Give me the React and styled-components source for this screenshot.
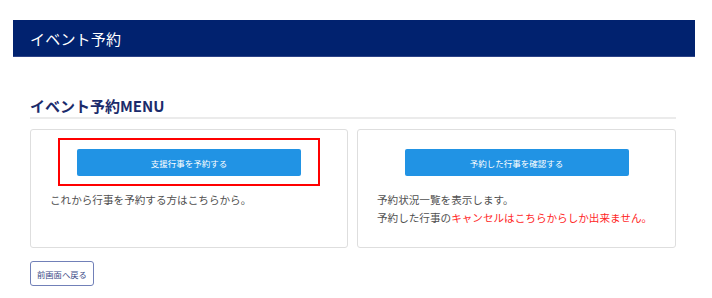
import React from 'react';
import styled, { createGlobalStyle } from 'styled-components';

const GlobalStyle = createGlobalStyle`
  body {
    margin: 0;
    background: #fff;
    font-family: "Noto Sans CJK JP", "Noto Sans", sans-serif;
  }
`;

const Page = styled.div`
  width: 712px;
  height: 298px;
  overflow: hidden;
  padding-top: 20px;
  box-sizing: border-box;
`;

const TitleBar = styled.header`
  display: flex;
  align-items: center;
  box-sizing: border-box;
  margin: 0 17px 0 13px;
  height: 37px;
  padding-left: 17px;
  background-color: #01226f;
  border-bottom: 1px solid #2d4387;
  color: #fff;
  font-size: 15px;
  letter-spacing: 0.2px;
`;

const Content = styled.main`
  padding: 0 36px 0 30px;
`;

const SectionTitle = styled.h2`
  margin: 38px 0 10px;
  padding-bottom: 0;
  border-bottom: 2px solid #ebebeb;
  color: #1b2b6b;
  font-size: 15px;
  font-weight: 700;
  line-height: 22px;
`;

const CardGrid = styled.div`
  display: grid;
  grid-template-columns: 318px 319px;
  gap: 9px;
`;

const Card = styled.section`
  padding: 19px 19px 20px;
  border: 1px solid #dedede;
  border-radius: 3px;
  background: #fff;
`;

const ButtonWrap = styled.div`
  position: relative;
  width: 224px;
  margin: 0 auto 15px;
`;

const Highlight = styled.span`
  position: absolute;
  top: -11px;
  bottom: -10px;
  left: -19px;
  right: -19px;
  border: 2px solid #f00;
  pointer-events: none;
`;

const PrimaryButton = styled.button`
  display: block;
  width: 100%;
  height: 27px;
  border: none;
  border-radius: 2px;
  background-color: #2193e4;
  color: #fff;
  font-family: inherit;
  font-size: 8.5px;
  cursor: pointer;
`;

const Note = styled.p`
  margin: 0;
  color: #505050;
  font-size: 10.6px;
  line-height: 18px;
  white-space: nowrap;
`;

const Warn = styled.span`
  color: #ff2626;
`;

const BackButton = styled.button`
  margin-top: 13px;
  height: 25px;
  padding: 0 6px;
  border: 1px solid #7180b8;
  border-radius: 3px;
  background: #fff;
  color: #3b4a86;
  font-family: inherit;
  font-size: 8.3px;
  cursor: pointer;
`;

const App = () => {
  return (
    <Page>
      <GlobalStyle />
      <TitleBar>イベント予約</TitleBar>
      <Content>
        <SectionTitle>イベント予約MENU</SectionTitle>
        <CardGrid>
          <Card>
            <ButtonWrap>
              <PrimaryButton>支援行事を予約する</PrimaryButton>
              <Highlight />
            </ButtonWrap>
            <Note>これから行事を予約する方はこちらから。</Note>
          </Card>
          <Card>
            <ButtonWrap>
              <PrimaryButton>予約した行事を確認する</PrimaryButton>
            </ButtonWrap>
            <Note>予約状況一覧を表示します。</Note>
            <Note>
              予約した行事の<Warn>キャンセルはこちらからしか出来ません。</Warn>
            </Note>
          </Card>
        </CardGrid>
        <BackButton>前画面へ戻る</BackButton>
      </Content>
    </Page>
  );
};

export default App;
